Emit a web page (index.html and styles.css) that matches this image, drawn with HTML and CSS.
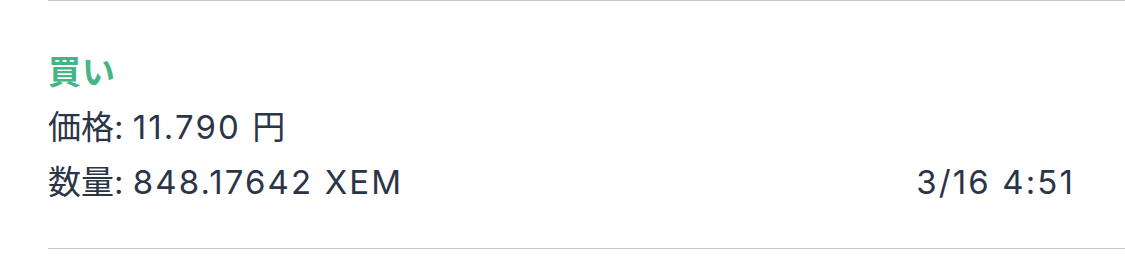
FILE: index.html
```html
<!DOCTYPE html>
<html lang="ja">
<head>
    <meta charset="UTF-8">
    <meta name="viewport" content="width=device-width, initial-scale=1.0">
    <title>約定履歴</title>
    <link rel="stylesheet" href="styles.css">
</head>
<body>
    <!-- Trade history list -->
    <ul class="trade-list">
        <li class="trade-item">
            <div class="trade-info">
                <div class="trade-side buy">買い</div>
                <div class="trade-row">価格: <span class="num">11.790 円</span></div>
                <div class="trade-row">数量: <span class="num">848.17642 XEM</span></div>
            </div>
            <div class="trade-date num">3/16 4:51</div>
        </li>
    </ul>
</body>
</html>
```

FILE: styles.css
```css
body {
    margin: 0;
    background-color: #fff;
    font-family: "Inter", "Noto Sans CJK JP", sans-serif;
    color: #2a3547;
}
.trade-list {
    list-style: none;
    margin: 0;
    padding: 0 0 0 48px;
}
.trade-item {
    display: flex;
    justify-content: space-between;
    align-items: flex-end;
    border-top: 1px solid #c8c8c8;
    border-bottom: 1px solid #c8c8c8;
    padding: 44px 50px 38px 0;
    font-size: 33px;
    line-height: 55px;
}
.trade-side {
    font-weight: bold;
    letter-spacing: 1px;
}
.buy {
    color: #45b587;
}
.num {
    letter-spacing: 2.1px;
}
```
